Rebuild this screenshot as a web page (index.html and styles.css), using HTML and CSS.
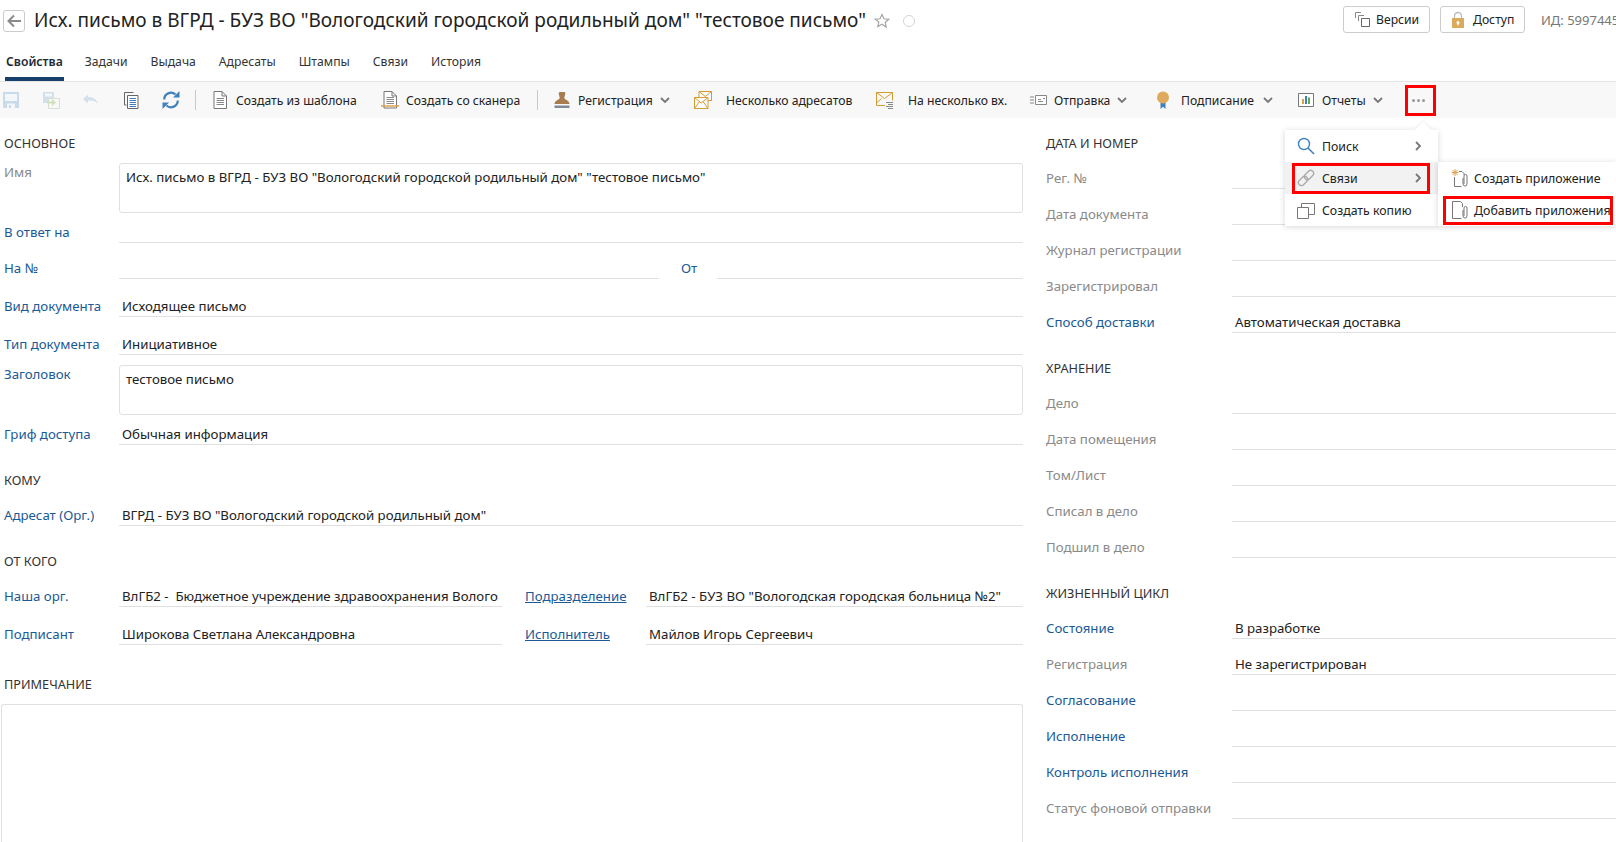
FILE: index.html
```html
<!DOCTYPE html>
<html lang="ru">
<head>
<meta charset="utf-8">
<title>Исх. письмо</title>
<link rel="stylesheet" href="styles.css">
</head>
<body>
<header class="head">
  <button class="back" type="button"><svg width="16" height="14" viewBox="0 0 16 14"><path d="M15 7H3M8 1.500 2.500 7 8 12.500" fill="none" stroke="#8a8a8a" stroke-width="2"/></svg></button>
  <h1 class="title">Исх. письмо в ВГРД - БУЗ ВО "Вологодский городской родильный дом" "тестовое письмо"</h1>
  <svg class="star" width="16" height="16" viewBox="0 0 16 16"><path d="m8 1.500 2 4.300 4.700.5-3.500 3.200 1 4.600L8 11.300 3.800 13.600l1-4.600L1.300 6.300 6 5.800z" fill="none" stroke="#a6a6a6" stroke-width="1.200"/></svg>
  <span class="dot"></span>
  <div class="head-right">
    <button class="hbtn" type="button"><svg width="17" height="17" viewBox="0 0 17 17"><path d="M1.500 7V1.500H7M4.500 10V4.500H10" fill="none" stroke="#888"/><path d="M7.500 7.500h8v8h-8z" fill="none" stroke="#666"/></svg>Версии</button>
    <button class="hbtn hbtn-lock" type="button"><svg width="14" height="18" viewBox="0 0 14 18"><path d="M3.500 8V5a3.500 3.500 0 0 1 7 0v3" fill="none" stroke="#bbb" stroke-width="1.300"/><rect x="1" y="7" width="12" height="10" fill="#dcaa5c"/><circle cx="7" cy="11.500" r="1.500" fill="#fff"/><rect x="6.400" y="12" width="1.200" height="2.500" fill="#fff"/></svg>Доступ</button>
    <span class="doc-id">ИД: 5997445</span>
  </div>
</header>

<nav class="tabs">
  <a class="tab tab-on">Свойства</a>
  <a class="tab">Задачи</a>
  <a class="tab">Выдача</a>
  <a class="tab">Адресаты</a>
  <a class="tab">Штампы</a>
  <a class="tab">Связи</a>
  <a class="tab">История</a>
</nav>

<div class="toolbar">
  <span class="tool"><svg class="ic" viewBox="0 0 18 18"><path d="M1 1h16v16H1z" fill="#c9daea"/><path d="M3 3h12v7H3z" fill="#f4f7fa"/><path d="M5 12.500h8V17H5z" fill="#f4f7fa"/><path d="M7 14h2v3H7z" fill="#c9daea"/></svg></span>
  <span class="tool"><svg class="ic" viewBox="0 0 18 18"><path d="M1 1h11v11H1z" fill="#d3e0ec"/><path d="M3 2.500h7v3H3z" fill="#f4f7fa"/><path d="M6.500 7.500h11v10h-11z" fill="#f8f8f6" stroke="#d8ddd8"/><path d="M5 10.500h5V8l4 3.500-4 3.500v-2.500H5z" fill="#cfe0bd"/></svg></span>
  <span class="tool"><svg class="ic" viewBox="0 0 18 18"><path d="M6 3.500 1 8l5 4.500V9.800c4-.8 7.500.2 10 3.200-1-4.500-5-7.500-10-7z" fill="#d3e0ec"/></svg></span>
  <span class="tool"><svg class="ic" viewBox="0 0 18 18"><path d="M2.500 14V1.500h9M2.500 14h2" fill="none" stroke="#666"/><path d="M5.500 4.500h10.500v13H5.500z" fill="#fff" stroke="#666"/><path d="M7.500 7.500h6.500M7.500 9.500h6.500M7.500 11.500h6.500M7.500 13.500h6.500M7.500 15.500h6.500" stroke="#3a7fc0"/></svg></span>
  <span class="tool"><svg class="ic" viewBox="0 0 18 18"><path d="M2.200 8.500a6.800 6.800 0 0 1 11.300-5" fill="none" stroke="#3f80bd" stroke-width="2.200"/><path d="M11 6.500h6.500V0z" fill="#3f80bd"/><path d="M15.800 9.500a6.800 6.800 0 0 1-11.300 5" fill="none" stroke="#3f80bd" stroke-width="2.200"/><path d="M7 11.500H.5V18z" fill="#3f80bd"/></svg></span>
  <span class="tool-sep"></span>
  <span class="tool"><svg class="ic" viewBox="0 0 18 18"><path d="M3 .5h8l4.500 4.500v12.500H3zM11 .5V5h4.500" fill="#fff" stroke="#777"/><path d="M5.500 7.500h7.500M5.500 9.500h7.500M5.500 11.500h7.500M5.500 13.500h7.500" stroke="#888"/></svg>Создать из шаблона</span>
  <span class="tool"><svg class="ic" viewBox="0 0 18 18"><path d="M3 .5h8l4.500 4.500v12H3zM11 .5V5h4.500" fill="#fff" stroke="#777"/><path d="M5.500 6.500h7.500M5.500 8.500h7.500M5.500 10.500h7.500M5.500 12.500h7.500" stroke="#888"/><path d="M0 15h18" stroke="#dca24b" stroke-width="1.500"/></svg>Создать со сканера</span>
  <span class="tool-sep"></span>
  <span class="tool"><svg class="ic" viewBox="0 0 18 18"><path d="M7 1h4.500c.8 0 1 1 .8 2l-1 3.500c-.5 2.500 5 2 5.200 6.500H1.500c.2-4.500 5.700-4 5.200-6.500l-1-3.500c-.2-1 .5-2 1.300-2z" fill="#a87c4f"/><path d="M1.500 14.500h15V17h-15z" fill="#7f8a96"/></svg>Регистрация<svg class="chev" viewBox="0 0 10 6"><path d="M1 1 5 5 9 1" fill="none" stroke="#777" stroke-width="1.800"/></svg></span>
  <span class="tool tool-wide"><svg class="ic" viewBox="0 0 18 18"><path d="M5 6V.5h12.500v9H14M5 .5l6.300 5L17.500.5" fill="#fff" stroke="#d39d35"/><path d="M.5 6.500h13.500v11H.5z" fill="#fff" stroke="#d39d35"/><path d="m.5 6.500 6.700 5.500 6.800-5.500M.5 17.500l5-7M14 17.500l-5-7" fill="none" stroke="#d39d35"/></svg>Несколько адресатов</span>
  <span class="tool tool-wide"><svg class="ic" viewBox="0 0 18 18"><path d="M.5 1.500h16v8M.5 1.500v13H9" fill="none" stroke="#d39d35"/><path d="m.5 1.500 8 6 8-6M.5 12l5-4.500" fill="none" stroke="#d39d35"/><path d="M10 11.500h7M12 13.500h5M10 15.500h7M12 17.500h5" stroke="#888"/></svg>На несколько вх.</span>
  <span class="tool"><svg class="ic" viewBox="0 0 18 18"><path d="M6.500 4.500h11v9h-11z" fill="#fff" stroke="#888"/><path d="M9 10.500h5M9 8.500h3M14 7.500h2" stroke="#888"/><path d="M1 6h4M1 9h4M1 12h4" stroke="#888"/></svg>Отправка<svg class="chev" viewBox="0 0 10 6"><path d="M1 1 5 5 9 1" fill="none" stroke="#777" stroke-width="1.800"/></svg></span>
  <span class="tool tool-mid"><svg class="ic" viewBox="0 0 18 18"><path d="M6.500 11h5v7L9 15.800 6.500 18z" fill="#3f80bd"/><circle cx="9" cy="6.500" r="6" fill="#e0aa5c"/></svg>Подписание<svg class="chev" viewBox="0 0 10 6"><path d="M1 1 5 5 9 1" fill="none" stroke="#777" stroke-width="1.800"/></svg></span>
  <span class="tool"><svg class="ic" viewBox="0 0 18 18"><path d="M1.500 2.500h15v13h-15z" fill="#fff" stroke="#777"/><path d="M5 8h2v5H5z" fill="#dca24b"/><path d="M8 5h2v8H8z" fill="#3f80bd"/><path d="M11 6.500h2V13h-2z" fill="#6aa84f"/></svg>Отчеты<svg class="chev" viewBox="0 0 10 6"><path d="M1 1 5 5 9 1" fill="none" stroke="#777" stroke-width="1.800"/></svg></span>
  <span class="tool-more"><i></i><i></i><i></i></span>
</div>

<main class="form">
  <section class="col-left">
    <h2 class="sec sec-first">ОСНОВНОЕ</h2>
    <div class="row-area"><span class="lbl lbl-gray">Имя</span><div class="area">Исх. письмо в ВГРД - БУЗ ВО "Вологодский городской родильный дом" "тестовое письмо"</div></div>
    <div class="row"><span class="lbl lbl-link">В ответ на</span><div class="val"></div></div>
    <div class="row row-pair-no"><span class="lbl lbl-link">На №</span><div class="val"></div><span class="lbl lbl-link lbl-from">От</span><div class="val"></div></div>
    <div class="row"><span class="lbl lbl-link">Вид документа</span><div class="val">Исходящее письмо</div></div>
    <div class="row"><span class="lbl lbl-link">Тип документа</span><div class="val">Инициативное</div></div>
    <div class="row-area"><span class="lbl lbl-link">Заголовок</span><div class="area">тестовое письмо</div></div>
    <div class="row"><span class="lbl lbl-link">Гриф доступа</span><div class="val">Обычная информация</div></div>
    <h2 class="sec">КОМУ</h2>
    <div class="row"><span class="lbl lbl-link">Адресат (Орг.)</span><div class="val">ВГРД - БУЗ ВО "Вологодский городской родильный дом"</div></div>
    <h2 class="sec">ОТ КОГО</h2>
    <div class="row row-pair"><span class="lbl lbl-link">Наша орг.</span><div class="val">ВлГБ2 -&nbsp; Бюджетное учреждение здравоохранения Волого</div><a class="lbl lbl-link lbl-under">Подразделение</a><div class="val">ВлГБ2 - БУЗ ВО "Вологодская городская больница №2"</div></div>
    <div class="row row-pair"><span class="lbl lbl-link">Подписант</span><div class="val">Широкова Светлана Александровна</div><a class="lbl lbl-link lbl-under">Исполнитель</a><div class="val">Майлов Игорь Сергеевич</div></div>
    <h2 class="sec">ПРИМЕЧАНИЕ</h2>
    <div class="note"></div>
  </section>

  <section class="col-right">
    <h2 class="sec sec-first">ДАТА И НОМЕР</h2>
    <div class="row"><span class="lbl lbl-gray">Рег. №</span><div class="val"></div></div>
    <div class="row"><span class="lbl lbl-gray">Дата документа</span><div class="val"></div></div>
    <div class="row"><span class="lbl lbl-gray">Журнал регистрации</span><div class="val"></div></div>
    <div class="row"><span class="lbl lbl-gray">Зарегистрировал</span><div class="val"></div></div>
    <div class="row"><span class="lbl lbl-link">Способ доставки</span><div class="val">Автоматическая доставка</div></div>
    <h2 class="sec">ХРАНЕНИЕ</h2>
    <div class="row"><span class="lbl lbl-gray">Дело</span><div class="val"></div></div>
    <div class="row"><span class="lbl lbl-gray">Дата помещения</span><div class="val"></div></div>
    <div class="row"><span class="lbl lbl-gray">Том/Лист</span><div class="val"></div></div>
    <div class="row"><span class="lbl lbl-gray">Списал в дело</span><div class="val"></div></div>
    <div class="row"><span class="lbl lbl-gray">Подшил в дело</span><div class="val"></div></div>
    <h2 class="sec">ЖИЗНЕННЫЙ ЦИКЛ</h2>
    <div class="row"><span class="lbl lbl-link">Состояние</span><div class="val">В разработке</div></div>
    <div class="row"><span class="lbl lbl-gray">Регистрация</span><div class="val">Не зарегистрирован</div></div>
    <div class="row"><span class="lbl lbl-link">Согласование</span><div class="val"></div></div>
    <div class="row"><span class="lbl lbl-link">Исполнение</span><div class="val"></div></div>
    <div class="row"><span class="lbl lbl-link">Контроль исполнения</span><div class="val"></div></div>
    <div class="row"><span class="lbl lbl-gray">Статус фоновой отправки</span><div class="val"></div></div>
  </section>
</main>

<div class="menu">
  <div class="menu-item"><svg class="ic" viewBox="0 0 18 18"><circle cx="7" cy="7" r="5.500" fill="none" stroke="#3f80bd" stroke-width="1.400"/><path d="m11 11 6 6" stroke="#3f80bd" stroke-width="1.600"/></svg><span class="menu-text">Поиск</span><svg class="arrow" viewBox="0 0 6 10"><path d="M1 1 5 5 1 9" fill="none" stroke="#777" stroke-width="1.800"/></svg></div>
  <div class="menu-item menu-item-on"><svg class="ic" viewBox="0 0 18 18"><g fill="none" stroke="#aaa" stroke-width="1.300" transform="rotate(-45 9 9)"><rect x="-.5" y="6" width="10.500" height="6" rx="3"/><rect x="8" y="6" width="10.500" height="6" rx="3"/></g></svg><span class="menu-text">Связи</span><svg class="arrow" viewBox="0 0 6 10"><path d="M1 1 5 5 1 9" fill="none" stroke="#777" stroke-width="1.800"/></svg></div>
  <div class="menu-item"><svg class="ic" viewBox="0 0 18 18"><path d="M.5 6.500h11v11H.5zM4.500 6.500v-4h13v11h-6" fill="none" stroke="#777"/></svg><span class="menu-text">Создать копию</span></div>
</div>
<div class="submenu">
  <div class="menu-item"><svg class="ic" viewBox="0 0 18 18"><path d="M3.500 8v9.500h7M8 2.500h3l2 2V6" fill="none" stroke="#777"/><path d="M12 9v6a2 2 0 0 0 4 0V7a1.500 1.500 0 0 0-3 0v8" fill="none" stroke="#777"/><path d="M4 0v7M.5 3.500h7M1.500 1l5 5M6.500 1l-5 5" stroke="#dca24b"/></svg><span class="menu-text">Создать приложение</span></div>
  <div class="menu-item menu-item-boxed"><svg class="ic" viewBox="0 0 18 18"><path d="M1.500 17.500V.5h8l2 2V6M1.500 17.500h9" fill="none" stroke="#777"/><path d="M12 9v6a2 2 0 0 0 4 0V7a1.500 1.500 0 0 0-3 0v8" fill="none" stroke="#777"/></svg><span class="menu-text">Добавить приложения</span></div>
</div>
</body>
</html>
```
FILE: styles.css
```css
*, *::before, *::after { box-sizing: border-box; }
html, body { margin: 0; height: 842px; overflow: hidden; }
body { background: #fff; color: #222; font: 13.25px/20px "Noto Sans", "Open Sans", sans-serif; position: relative; }

.head { display: flex; align-items: center; height: 41px; padding-left: 3px; }
.back { width: 22px; height: 22px; padding: 0; display: flex; align-items: center; justify-content: center; background: #fff; border: 1px solid #ccc; border-radius: 3px; }
.title { margin: -2px 0 0 9px; font-size: 19.05px; font-weight: 400; line-height: 28px; color: #222; white-space: nowrap; }
.star { margin-left: 8px; }
.dot { width: 12px; height: 12px; margin-left: 13px; border: 1px solid #d5d5d5; border-radius: 50%; }
.head-right { position: absolute; left: 1343px; top: 6px; width: 273px; display: flex; align-items: center; overflow: hidden; }
.hbtn { display: flex; flex: none; align-items: center; gap: 5px; width: 87px; height: 27px; margin-right: 10px; padding: 0 0 0 10px; background: #fff; border: 1px solid #ccc; border-radius: 3px; font: inherit; font-size: 12.2px; color: #222; }
.hbtn-lock { width: 85px; gap: 8px; margin-right: 16px; }
.doc-id { flex: none; color: #777; font-size: 13px; white-space: nowrap; }

.tabs { display: flex; height: 41px; padding-left: 5px; gap: 21px; border-bottom: 1px solid #e4e4e4; font-size: 12.2px; }
.tab { padding: 11px 1px 0; color: #333; height: 40px; }
.tab-on { font-weight: 600; color: #1f2b38; border-bottom: 4px solid #17406d; margin-right: -1px; }

.toolbar { display: grid; grid-template-columns: 40px 40px 40px 40px 33px 16px 170px 156px 16px 141px 182px 153px 125px 143px 108px 31px; align-items: center; height: 36px; padding-left: 2px; background: #f8f8f8; font-size: 12.2px; }
.tool { display: flex; align-items: center; gap: 7px; padding-top: 2px; white-space: nowrap; color: #222; }
.tool-wide { gap: 14px; }
.tool-mid { gap: 9px; }
.ic { width: 18px; height: 18px; flex: none; }
.tool .ic, .tool .chev { margin-top: -2px; }
.chev { width: 10px; height: 6px; }
.tool-sep { width: 1px; height: 20px; background: #c8c8c8; }
.tool-more { display: flex; align-items: center; justify-content: center; gap: 2px; width: 31px; height: 31px; padding-right: 4px; border: 3px solid #f00; }
.tool-more i { width: 3px; height: 3px; border-radius: 50%; background: #999; }

.form { display: grid; grid-template-columns: 1023px 570px; column-gap: 23px; height: 724px; }
.col-left { display: grid; grid-template-rows: 45px 50px 30px 36px 38px 38px 60px 30px 45px 36px 45px 36px 38px 49px 1fr; min-width: 0; }
.col-right { display: grid; grid-template-rows: 35px repeat(5, 36px) 45px repeat(5, 36px) 45px repeat(6, 36px); min-width: 0; }
.sec { margin: 0; align-self: end; font-size: 12.7px; font-weight: 400; line-height: 20px; color: #333; padding-left: 4px; }
.sec-first { align-self: start; margin-top: 15px; }
.col-right .sec { padding-left: 0; }

.row { display: grid; grid-template-columns: 119px 1fr; align-items: end; min-width: 0; }
.col-right .row { grid-template-columns: 186px 1fr; }
.row-pair-no { grid-template-columns: 119px 540px 58px 306px; }
.row-pair { grid-template-columns: 119px 383px 144px 1fr; }
.row-area { display: grid; grid-template-columns: 119px 1fr; align-self: end; }
.lbl { padding: 0 0 1px 4px; white-space: nowrap; }
.row-area .lbl { margin-top: -1px; }
.col-right .lbl { padding-left: 0; }
.lbl-gray { color: #8a8a8a; }
.lbl-link { color: #1a5a96; }
.lbl-under { text-decoration: underline; padding-left: 23px; }
.lbl-from { padding-left: 22px; }
.val { height: 24px; padding: 3px 3px 0; line-height: 20px; color: #222; border-bottom: 1px solid #e0e0e0; white-space: nowrap; overflow: hidden; }
.area { height: 50px; padding: 3px 6px; border: 1px solid #e0e0e0; border-radius: 3px; color: #222; }
.note { margin: 10px 0 0 1px; border: 1px solid #e0e0e0; border-radius: 3px 3px 0 0; border-bottom: 0; min-height: 140px; }

.menu { position: absolute; left: 1285px; top: 130px; width: 153px; height: 96px; background: #fff; box-shadow: 0 1px 6px rgba(0,0,0,.16); font-size: 12.3px; }
.menu::before { content: ""; position: absolute; left: 132px; top: -6px; width: 12px; height: 12px; background: #fff; transform: rotate(45deg); box-shadow: -1px -1px 2px rgba(0,0,0,.06); }
.submenu { position: absolute; left: 1438px; top: 162px; width: 178px; height: 64px; background: #fff; box-shadow: 0 1px 6px rgba(0,0,0,.16); font-size: 12.4px; }
.menu-item { position: relative; display: flex; align-items: center; gap: 7px; height: 32px; padding-left: 12px; white-space: nowrap; color: #222; }
.menu-item-on { background: #f2f2f2; }
.menu-item-on::after { content: ""; position: absolute; left: 7px; top: 1px; width: 138px; height: 31px; border: 3px solid #f00; }
.submenu .menu-item { padding-left: 13px; gap: 5px; }
.menu-item-boxed::after { content: ""; position: absolute; left: 5px; top: 2px; width: 170px; height: 29px; border: 3px solid #f00; }
.menu-text { flex: 1; position: relative; z-index: 1; padding-top: 2px; }
.arrow { width: 6px; height: 10px; margin-right: 17px; position: relative; }
```
